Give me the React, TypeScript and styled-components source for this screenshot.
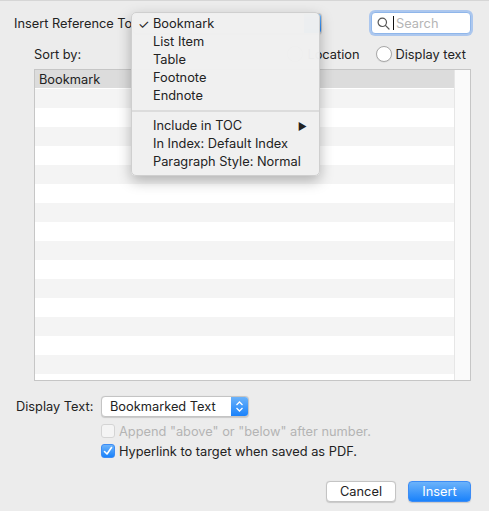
import styled, { createGlobalStyle } from "styled-components";

const GlobalStyle = createGlobalStyle`
  html, body {
    margin: 0;
    padding: 0;
    background: #ececec;
  }
  body {
    font-family: Inter, "Liberation Sans", Arial, sans-serif;
    font-size: 12.8px;
    color: #222;
  }
`;

// STYLED COMPONENTS
const Dialog = styled.div`
  width: 489px;
  height: 511px;
  box-sizing: border-box;
  border-top: 1px solid #d6d6d6;
  padding: 10px 18px 0 14px;
  display: flex;
  flex-direction: column;
`;

const TopRow = styled.div`
  display: flex;
  align-items: center;
  height: 24px;
`;

const Label = styled.span<{ $width?: number }>`
  white-space: nowrap;
  ${(p) => (p.$width ? `width: ${p.$width}px; flex-shrink: 0;` : "")}
`;

const PopupWrap = styled.div`
  position: relative;
`;

const PopupButton = styled.div<{ $width: number }>`
  position: relative;
  width: ${(p) => p.$width}px;
  height: 21px;
  box-sizing: border-box;
  background: #fff;
  border: 1px solid #c4c4c4;
  border-radius: 4px;
  display: flex;
  align-items: center;
  padding-left: 8px;
  overflow: hidden;
  box-shadow: 0 0.5px 1px rgba(0, 0, 0, 0.15);
`;

const Stepper = styled.div`
  position: absolute;
  right: 0;
  top: 0;
  bottom: 0;
  width: 17px;
  background: linear-gradient(#6cb3fa, #1a82fb);
  display: flex;
  align-items: center;
  justify-content: center;
`;

const Menu = styled.div`
  position: absolute;
  left: -2px;
  top: -1px;
  width: 189px;
  box-sizing: border-box;
  padding: 2px 0 4px;
  background: rgba(240, 240, 240, 0.98);
  border: 1px solid #cfcfcf;
  border-radius: 5px;
  box-shadow: 0 5px 14px rgba(0, 0, 0, 0.28);
  z-index: 10;
`;

const MenuItem = styled.div`
  position: relative;
  height: 18px;
  line-height: 18px;
  padding-left: 21px;
  color: #222;
  white-space: nowrap;
`;

const Check = styled.span`
  position: absolute;
  left: 6px;
  top: 0;
  font-size: 13px;
`;

const SubArrow = styled.span`
  position: absolute;
  right: 12px;
  top: 0;
  font-size: 10px;
`;

const Separator = styled.div`
  height: 2px;
  background: #dcdcdc;
  margin: 5px 0 5px;
`;

const Spacer = styled.div`
  flex: 1;
`;

const SearchField = styled.div`
  width: 100px;
  height: 22px;
  box-sizing: border-box;
  background: #fff;
  border: 1px solid #8fb6ea;
  box-shadow: 0 0 0 2px rgba(120, 170, 240, 0.55);
  border-radius: 4px;
  display: flex;
  align-items: center;
  padding-left: 5px;
  gap: 3px;
`;

const Caret = styled.span`
  width: 1px;
  height: 14px;
  background: #111;
`;

const Placeholder = styled.span`
  color: #b5b5b5;
  margin-left: -1px;
`;

const SortRow = styled.div`
  display: flex;
  align-items: center;
  height: 20px;
  margin-top: 9px;
  padding-left: 20px;
`;

const RadioGroup = styled.div`
  margin-left: auto;
  display: flex;
  align-items: center;
  gap: 16px;
  margin-right: 5px;
`;

const Radio = styled.label`
  display: flex;
  align-items: center;
  gap: 4px;
`;

const RadioCircle = styled.span`
  width: 16px;
  height: 16px;
  box-sizing: border-box;
  border: 1px solid #a8a8a8;
  border-radius: 50%;
  background: #fff;
  box-shadow: 0 0.5px 1px rgba(0, 0, 0, 0.1);
`;

const Table = styled.div`
  margin: 5px 0 0 20px;
  height: 312px;
  box-sizing: border-box;
  border: 1px solid #c6c6c6;
  background: #fff;
  display: flex;
  overflow: hidden;
`;

const TableBody = styled.div`
  flex: 1;
  display: flex;
  flex-direction: column;
`;

const HeaderCell = styled.div`
  height: 18px;
  line-height: 19px;
  padding-left: 4px;
  background: #dcdcdc;
  border-bottom: 1px solid #fff;
`;

const Row = styled.div<{ $odd: boolean }>`
  height: 19px;
  flex-shrink: 0;
  background: ${(p) => (p.$odd ? "#f4f4f4" : "#ffffff")};
`;

const ScrollTrack = styled.div`
  width: 15px;
  background: #fafafa;
  border-left: 1px solid #e6e6e6;
`;

const DisplayRow = styled.div`
  display: flex;
  align-items: center;
  margin-top: 15px;
  padding-left: 2px;
`;

const OptionList = styled.div`
  display: flex;
  flex-direction: column;
  gap: 6px;
  margin: 7px 0 0 87px;
`;

const Option = styled.label<{ $disabled?: boolean }>`
  display: flex;
  align-items: center;
  gap: 4px;
  height: 14px;
  color: ${(p) => (p.$disabled ? "#b4b4b4" : "#222")};
`;

const CheckBox = styled.span<{ $checked?: boolean; $disabled?: boolean }>`
  width: 14px;
  height: 14px;
  box-sizing: border-box;
  border-radius: 3px;
  display: flex;
  align-items: center;
  justify-content: center;
  border: 1px solid ${(p) => (p.$checked ? "#3c8cf5" : p.$disabled ? "#d4d4d4" : "#a8a8a8")};
  background: ${(p) =>
    p.$checked ? "linear-gradient(#6cb3fa, #1a82fb)" : p.$disabled ? "#f4f4f4" : "#fff"};
`;

const ButtonRow = styled.div`
  display: flex;
  justify-content: flex-end;
  gap: 12px;
  margin-top: 23px;
`;

const Button = styled.div<{ $primary?: boolean }>`
  height: 21px;
  box-sizing: border-box;
  border-radius: 4px;
  display: flex;
  align-items: center;
  justify-content: center;
  width: ${(p) => (p.$primary ? 63 : 70)}px;
  color: ${(p) => (p.$primary ? "#fff" : "#222")};
  background: ${(p) => (p.$primary ? "linear-gradient(#6cb3fa, #1a82fb)" : "#fff")};
  border: 1px solid ${(p) => (p.$primary ? "#3c8cf5" : "#c4c4c4")};
  box-shadow: 0 0.5px 1px rgba(0, 0, 0, 0.15);
`;

const menuTop = ["Bookmark", "List Item", "Table", "Footnote", "Endnote"];
const menuBottom = ["Include in TOC", "In Index: Default Index", "Paragraph Style: Normal"];

export default function App() {
  return (
    <>
      <GlobalStyle />
      <Dialog>
        <TopRow>
          <Label $width={119}>Insert Reference To</Label>
          <PopupWrap>
            {/* the open menu covers the popup's own label */}
            <PopupButton $width={189}>
              <Stepper />
            </PopupButton>
            <Menu>
              {menuTop.map((item, i) => (
                <MenuItem key={item}>
                  {i === 0 && <Check>✓</Check>}
                  {item}
                </MenuItem>
              ))}
              <Separator />
              {menuBottom.map((item, i) => (
                <MenuItem key={item}>
                  {item}
                  {i === 0 && <SubArrow>▶</SubArrow>}
                </MenuItem>
              ))}
            </Menu>
          </PopupWrap>
          <Spacer />
          <SearchField>
            <svg width="13" height="13" viewBox="0 0 13 13" fill="none" stroke="#555" strokeWidth="1.2">
              <circle cx="5.3" cy="5.3" r="4.2" />
              <line x1="8.4" y1="8.4" x2="12" y2="12" strokeLinecap="round" />
            </svg>
            <Caret />
            <Placeholder>Search</Placeholder>
          </SearchField>
        </TopRow>

        <SortRow>
          <Label>Sort by:</Label>
          <RadioGroup>
            <Radio>
              <RadioCircle />
              Location
            </Radio>
            <Radio>
              <RadioCircle />
              Display text
            </Radio>
          </RadioGroup>
        </SortRow>

        <Table>
          <TableBody>
            <HeaderCell>Bookmark</HeaderCell>
            {Array.from({ length: 16 }).map((_, i) => (
              <Row key={i} $odd={i % 2 === 0} />
            ))}
          </TableBody>
          <ScrollTrack />
        </Table>

        <DisplayRow>
          <Label $width={85}>Display Text:</Label>
          <PopupButton $width={148}>
            Bookmarked Text
            <Stepper>
              <svg width="9" height="13" viewBox="0 0 9 13" fill="none" stroke="#fff" strokeWidth="1.3">
                <polyline points="1.5,5 4.5,2 7.5,5" />
                <polyline points="1.5,8 4.5,11 7.5,8" />
              </svg>
            </Stepper>
          </PopupButton>
        </DisplayRow>

        <OptionList>
          <Option $disabled>
            <CheckBox $disabled />
            Append "above" or "below" after number.
          </Option>
          <Option>
            <CheckBox $checked>
              <svg width="10" height="10" viewBox="0 0 10 10" fill="none" stroke="#fff" strokeWidth="1.6">
                <polyline points="1.5,5.5 4,8 8.5,1.5" strokeLinecap="round" strokeLinejoin="round" />
              </svg>
            </CheckBox>
            Hyperlink to target when saved as PDF.
          </Option>
        </OptionList>

        <ButtonRow>
          <Button>Cancel</Button>
          <Button $primary>Insert</Button>
        </ButtonRow>
      </Dialog>
    </>
  );
}
